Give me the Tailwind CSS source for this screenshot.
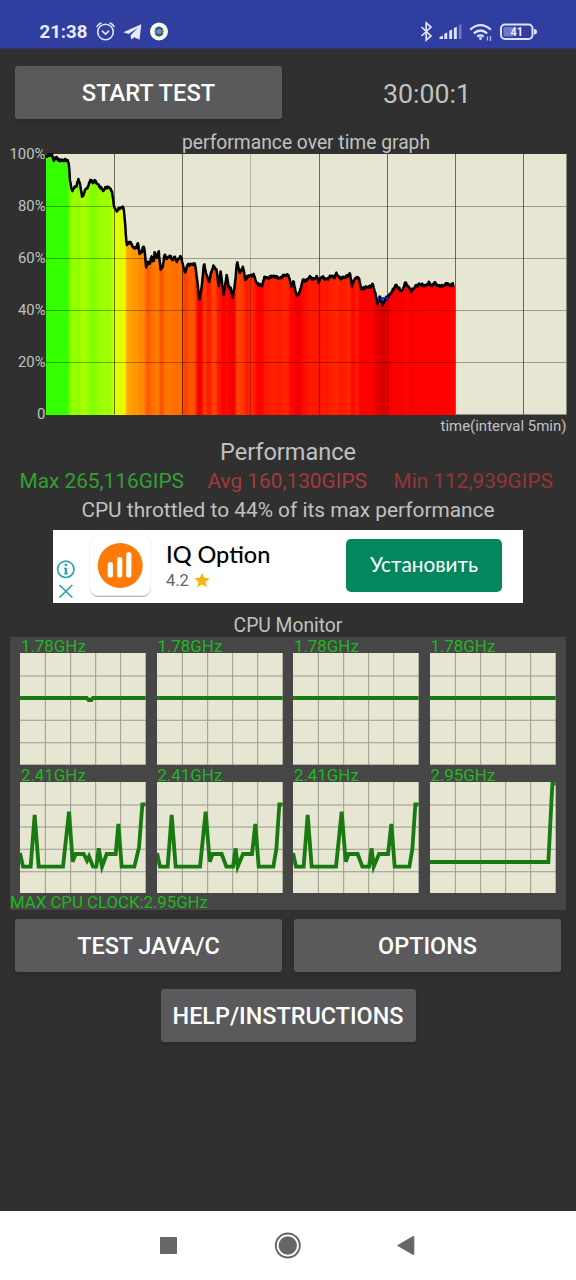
<!DOCTYPE html>
<html lang="en">
<head>
<meta charset="utf-8">
<title>CPU Throttling Test</title>
<script src="https://cdn.jsdelivr.net/npm/@tailwindcss/browser@4"></script>
</head>
<body class="w-[576px] h-[1280px] overflow-hidden bg-[#303030] font-['Roboto',sans-serif] text-[#c1c1c1] flex flex-col whitespace-nowrap">
<header class="h-[49px] shrink-0 bg-[#303f9f] border-b border-[#2c3560]">
  <svg class="block w-[576px] h-12" viewBox="0 0 576 48" fill="none">
    <text x="39.500" y="38.200" font-size="18.500" font-weight="700" fill="#e8eaff" textLength="48" lengthAdjust="spacingAndGlyphs">21:38</text>
    <g stroke="#dfe3fa" stroke-width="1.600" stroke-linecap="round" stroke-linejoin="round">
      <circle cx="105.500" cy="32" r="7.800"/><path d="M102.300 31.200l3.200 3 3.200-3M97 26.500q1.500-2.500 4-3.500M114 26.500q-1.500-2.500-4-3.500"/>
    </g>
    <path d="M123.300 32.300L141.300 24.300 139.500 39.700 134.300 37.300 131.200 39.500 130.600 35.300 138 27.800 128.500 33.900z" fill="#e8eaff"/>
    <circle cx="159" cy="31.500" r="9" fill="#fafbf2"/>
    <path d="M155.500 28l3.500-1.800 3.600 1.800 1 3.500-1 3.800-3.600 1.500-3.500-1.500-.8-3.800z" fill="#2d5c7b"/><path d="M155.300 28.500v6.500M162.800 28.500v6" stroke="#6ca63c"/><circle cx="159" cy="31.500" r="2.500" fill="#6f8ad8"/>
    <path d="M421.500 27l9.500 9-4.800 4.200V22.800L431 27l-9.500 9" stroke="#dfe3fa" stroke-width="1.700"/>
    <g fill="#dfe3fa"><path d="M439.500 39v-2l3.500-1.500V39zM444.300 39v-5.300l2.900-1.200V39zM449.200 39v-8.300l2.900-1.200V39zM453.900 39V28l2.900-1.200V39z"/><path d="M458.800 39V25.200l2.700-1.200v15z" opacity=".35"/></g>
    <g stroke="#dfe3fa" stroke-width="2.200"><path d="M470.200 29.700q10.300-9 20.600 0M473.800 33.300q6.700-5.600 13.400 0M477.300 36.600q3.200-2.400 6.400 0"/></g>
    <circle cx="480.500" cy="38.500" r="1.400" fill="#dfe3fa"/><path d="M487.500 36.500v4M490.500 36v5" stroke="#b3bbea" stroke-width="1.300"/>
    <rect x="501" y="24.500" width="31.500" height="14.500" rx="4" stroke="#dfe3fa" stroke-width="2"/>
    <rect x="503.500" y="27" width="10" height="9.500" rx="1.500" fill="#6f7bc4"/><path d="M534 29q3 0 3 2.700T534 34.500z" fill="#dfe3fa"/>
    <text x="510.500" y="36.300" font-size="12.500" font-weight="700" fill="#f0f2ff" textLength="12.500" lengthAdjust="spacingAndGlyphs">41</text>
  </svg>
</header>

<section class="flex shrink-0 h-[81px] pt-[17px] pl-[15px]">
  <button class="w-[267px] h-[53px] rounded-[3px] bg-[#5a5a5c] text-white font-medium text-[23.700px] shadow-md pt-[3px]">START TEST</button>
  <div class="w-[290px] h-[57px] flex items-center justify-center text-[26.700px]"><span>30:00:1</span></div>
</section>

<svg class="block w-[576px] h-[308px] shrink-0" viewBox="0 130 576 308">
  <text x="182" y="149" font-size="20" fill="#c1c1c1" textLength="248" lengthAdjust="spacingAndGlyphs">performance over time graph</text>
  <g font-size="15" fill="#c1c1c1" text-anchor="end">
    <text x="45.500" y="159" textLength="36" lengthAdjust="spacingAndGlyphs">100%</text>
    <text x="45.500" y="211" textLength="27.500" lengthAdjust="spacingAndGlyphs">80%</text>
    <text x="45.500" y="263" textLength="27.500" lengthAdjust="spacingAndGlyphs">60%</text>
    <text x="45.500" y="315" textLength="27.500" lengthAdjust="spacingAndGlyphs">40%</text>
    <text x="45.500" y="367" textLength="27.500" lengthAdjust="spacingAndGlyphs">20%</text>
    <text x="45.500" y="419">0</text>
  </g>
  <rect x="46" y="154" width="520.500" height="260.500" fill="#e6e6d2"/>
  <g id="bars" shape-rendering="crispEdges"></g>
  <g stroke="#000" fill="none">
    <path d="M46 206.500H566.500M46 258.500H566.500M46 310.500H566.500M46 362.500H566.500" stroke-opacity=".32"/>
    <path d="M114.500 154V414.500M182.500 154V414.500M319.500 154V414.500M387.500 154V414.500M455.500 154V414.500M523.500 154V414.500" stroke-opacity=".55"/>
    <path d="M250.500 154V414.500" stroke-opacity=".22"/>
  </g>
  <polyline id="trace" fill="none" stroke="#000" stroke-width="2.500" stroke-linejoin="round"/>
  <path d="M376.500 297H379.500L378.500 301.500zM381 297.500L384.500 297 383 301.500 381 300zM385.500 297H389.500L387.500 300 386 302z" fill="#1c1cdc"/>
  <text x="440.500" y="431" font-size="15" fill="#c1c1c1" textLength="126" lengthAdjust="spacingAndGlyphs">time(interval 5min)</text>
</svg>

<section class="flex flex-col items-center shrink-0 h-[92px]">
  <h2 class="text-[23.500px] leading-[28px]">Performance</h2>
  <div class="w-full h-[30px] flex items-center pl-[19.500px] text-[20.800px] leading-[30px]">
    <span class="w-[188px] text-[#33a033]">Max 265,116GIPS</span>
    <span class="w-[186px] text-[#a33a3c]">Avg 160,130GIPS</span>
    <span class="text-[#96343a]">Min 112,939GIPS</span>
  </div>
  <p class="text-[20.850px] leading-[28px]">CPU throttled to 44% of its max performance</p>
</section>

<section class="mx-[53px] w-[470px] h-[73px] shrink-0 bg-white flex items-center text-black">
  <svg class="block w-[104px] h-[73px] shrink-0" viewBox="53 530 104 73" fill="none">
    <g stroke="#2ba3ae" stroke-width="1.700"><circle cx="65.800" cy="569.300" r="8.200"/><path d="M59.500 585l12.800 12.500M72.300 585l-12.800 12.500"/></g>
    <path d="M65.900 563.800v2.200M65.900 567.800v6.500" stroke="#2ba3ae" stroke-width="2.400"/><path d="M64 568.300h2M63.800 573.800h4.300" stroke="#2ba3ae"/>
    <rect x="90" y="537" width="60.500" height="60" rx="8" fill="#bbb"/><rect x="89.500" y="535.500" width="61.500" height="60.500" rx="8" fill="#e6e6e6"/><rect x="90" y="535.500" width="60.500" height="59.500" rx="8" fill="#fff"/>
    <circle cx="120.200" cy="565.500" r="22.500" fill="#ff7a08"/>
    <path d="M110.300 564.500v10.500M119.700 559.500V575M128.800 554.500V575" stroke="#fff" stroke-width="5.200" stroke-linecap="round"/>
  </svg>
  <div class="w-[189px] pl-[9px] flex flex-col">
    <div class="font-['Lato',sans-serif] font-medium text-[23.500px] leading-[27px] h-[28px]">IQ Option</div>
    <div class="flex items-center gap-[5px] h-[24px] text-[16.500px] text-[#666]"><span class="pt-0.5">4.2</span>
      <svg class="w-4 h-4 -mt-px" viewBox="0 0 24 24" fill="#f2b90c"><path d="M12 1l3.300 7.700 8.200.7-6.200 5.500 1.900 8.100L12 18.700 4.800 23l1.900-8.100L.5 9.400l8.200-.7z"/></svg>
    </div>
  </div>
  <button class="w-[156px] h-[53px] rounded-[5px] bg-[#04875f] text-white font-['Lato',sans-serif] text-[20.800px] -mt-[3px] pb-0.5">Установить</button>
</section>

<h3 class="h-[34px] shrink-0 text-center text-[19.300px] leading-[45px]">CPU Monitor</h3>

<section class="ml-[10px] w-[556px] h-[273px] shrink-0 bg-[#464646] text-[#20b820] flex flex-col">
  <div id="cores" class="grid grid-cols-[repeat(4,136.500px)] pl-[10.400px] h-[257px]"></div>
  <div class="text-[16.800px] leading-[17px]"><span id="clock">MAX CPU CLOCK:2.95GHz</span></div>
</section>

<section class="flex flex-col items-center shrink-0 pt-[9px] gap-[17px] text-white font-medium text-[23.400px]">
  <div class="flex gap-3">
    <button class="w-[267px] h-[53px] rounded-[3px] bg-[#5a5a5c] shadow-md pt-0.5">TEST JAVA/C</button>
    <button class="w-[267px] h-[53px] rounded-[3px] bg-[#5a5a5c] shadow-md pt-0.5">OPTIONS</button>
  </div>
  <button class="w-[255px] h-[53px] rounded-[3px] bg-[#5a5a5c] shadow-md pt-0.5">HELP/INSTRUCTIONS</button>
</section>

<nav class="mt-auto h-[69px] shrink-0 bg-white">
  <svg class="block w-[576px] h-[69px]" viewBox="0 1211 576 69">
    <rect x="160" y="1237" width="17" height="17" rx=".8" fill="#666"/>
    <circle cx="287.800" cy="1245.500" r="12" fill="none" stroke="#666" stroke-width="1.900"/><circle cx="287.800" cy="1245.500" r="9.200" fill="#666"/>
    <path d="M397.500 1245.500l15.500-9q.9-.4.900.6v16.800q0 1-.9.600z" fill="#666" stroke="#666" stroke-width=".8"/>
  </svg>
</nav>

<script>
const NS = 'http://www.w3.org/2000/svg';
// Samples in thirds of a pixel: x from the left edge, y from the top of the graph block.
const first = '138,82 142,76 157,76 160,90 166,86 170,78 173,90 203,91 207,105 210,150 216,185 222,172 229,170 232,156 235,150 240,160 246,200 252,190 258,175 264,172 268,158 272,148 278,158 285,152 295,165 303,174 310,182 318,172 330,173 337,190 343,235 352,243 358,234 366,234 370,228 374,265 380,345 390,335 397,348 404,355 410,350 414,338 418,370 426,365 430,345 434,362 438,410 446,395 450,400 455,378 461,398 464,368 470,384 476,362 482,420 488,410 494,372 500,388 510,376 516,390 524,380 530,394 542,378 548,400 555,430 562,405 580,402 586,405 592,455 598,508 604,480 612,400 618,430 627,456 633,430 640,408 650,420 656,472 662,424 671,495 680,434 686,470 692,475 698,503 704,470 711,395';
const second = '180,430 189,410 196,450 204,438 222,435 230,460 246,468 254,440 262,445 278,438 300,445 312,436 326,436 334,470 340,452 350,498 360,485 368,450 380,452 388,440 400,448 412,440 416,458 424,440 440,448 456,436 462,446 468,430 480,445 500,440 510,430 516,468 524,445 536,442 544,478 556,472 572,470 578,462 586,490 592,522 600,498 608,526 616,505 624,500 636,485 648,464 660,480 668,482 675,458 684,468 694,484 705,470 720,462 735,468 748,458 755,470 763,458 775,468 790,468 802,460 810,468 818,462 824,470';
const parse = (s, dx) => s.split(' ').map(p => { const [x, y] = p.split(',').map(Number); return [dx + x / 3, 130 + y / 3]; });
const pts = [...parse(first, 0), ...parse(second, 180)];
const at = x => { for (let i = 1; i < pts.length; i++) if (x <= pts[i][0]) { const [a, b] = pts[i - 1], [c, d] = pts[i]; return b + (d - b) * (x - a) / (c - a); } return pts[pts.length - 1][1]; };
const ramp = [[40, 200, 0], [42, 208, 0], [45, 232, 0], [49, 255, 0], [50.5, 255, 4], [53, 255, 34], [57, 255, 78], [60, 255, 115], [66, 255, 165], [73, 255, 225], [76, 240, 255], [80, 216, 255], [84, 180, 255], [88, 148, 255], [97, 54, 255], [101, 50, 255]];
const tint = p => { for (let i = 1; i < ramp.length; i++) if (p <= ramp[i][0]) { const a = ramp[i - 1], b = ramp[i], t = (p - a[0]) / (b[0] - a[0]); return `rgb(${a[1] + (b[1] - a[1]) * t},${a[2] + (b[2] - a[2]) * t},0)`; } };
const bars = document.getElementById('bars');
for (let x = 46; x < 455; x++) {
  const y = at(x + .5), r = document.createElementNS(NS, 'rect');
  r.setAttribute('x', x); r.setAttribute('y', y); r.setAttribute('width', 1); r.setAttribute('height', 414.5 - y);
  r.setAttribute('fill', tint((414 - (at(x - 1) + y + at(x + 2)) / 3) / 2.6));
  bars.appendChild(r);
}
const line = [];
for (let x = 46; x <= 454.5; x += .6) line.push(x.toFixed(2) + ',' + (at(x) + Math.sin(x * 4.7) * .8 + Math.sin(x * 1.9) * .5).toFixed(2));
document.getElementById('trace').setAttribute('points', line.join(' '));

const flat = '0,135 377,135';
const busy = '0,213 9,254 32,254 44,99 56,254 129,254 146,89 158,239 167,216 194,216 208,254 228,254 236,199 242,254 258,216 285,216 295,126 305,254 349,254 358,201 367,67 377,67';
const cores = [
  ['1.78GHz', '0,135 200,135 206,141 214,141 219,135 377,135'], ['1.78GHz', flat], ['1.78GHz', flat], ['1.78GHz', flat],
  ['2.41GHz', '0,213 9,254 32,254 44,99 56,254 129,254 147,89 158,239 167,216 191,216 201,236 207,223 219,254 229,254 236,199 246,254 260,216 287,216 295,126 305,254 343,254 357,196 367,67 377,67'],
  ['2.41GHz', busy], ['2.41GHz', busy], ['2.95GHz', '0,240 355,240 367,5 377,5']
];
document.getElementById('cores').innerHTML = cores.map(([label, p]) => `
  <div class="flex flex-col h-[128.500px]">
    <div class="h-[16.300px] pl-[0.500px] text-[16.900px] leading-[19px]">${label}</div>
    <svg class="block w-[125.700px] h-[111.700px]" viewBox="0 0 377 335" preserveAspectRatio="none">
      <rect width="377" height="335" fill="#e6e6d2"/>
      <path d="M76 0V335M152 0V335M227 0V335M302 0V335M0 69H377M0 135H377M0 202H377M0 269H377" stroke="#000" stroke-opacity=".33" stroke-width="3"/>
      <polyline points="${p}" fill="none" stroke="#1a7a12" stroke-width="11.500"/>
    </svg>
  </div>`).join('');
</script>
</body>
</html>
